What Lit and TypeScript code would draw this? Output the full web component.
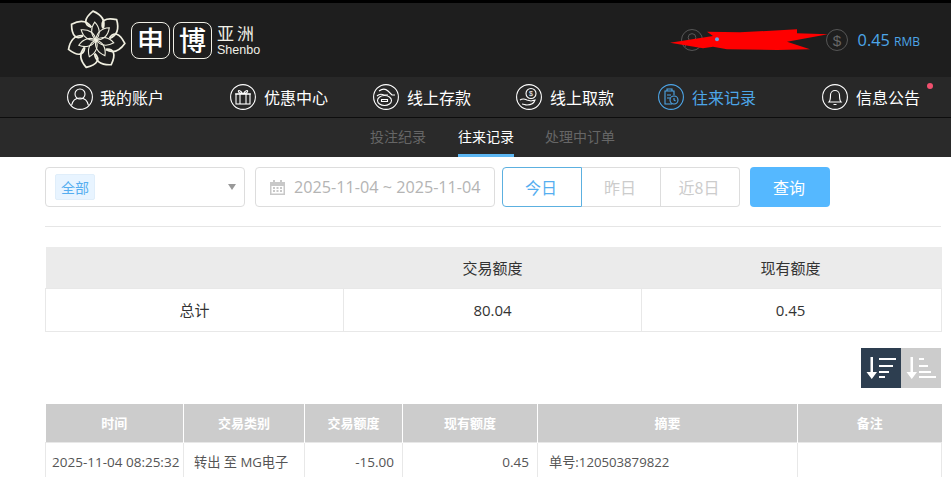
import { LitElement, html, css, svg } from "lit";
import { customElement } from "lit/decorators.js";

const petals = [0, 1, 2, 3, 4, 5, 6];

@customElement("app-root")
export class AppRoot extends LitElement {
  static styles = css`
    :host { display: block; width: 951px; height: 477px; overflow: hidden; position: relative; background: #fff;
      font-family: "Open Sans", "Noto Sans CJK SC", sans-serif; color: #555; }
    * { box-sizing: border-box; }
    svg { display: block; flex: none; }
    .top { height: 77px; background: #1e1e1e; border-top: 3px solid #000; display: flex; align-items: center; padding-left: 65px; position: relative; }
    .logo { display: flex; align-items: center; }
    .chars { display: flex; gap: 3px; margin-left: 4px; }
    .char { width: 39px; height: 37px; border: 1px solid #f0efe6; border-radius: 8px; color: #fff; font-size: 27px; font-weight: 500; line-height: 33px; text-align: center; font-family: "Noto Sans CJK SC", sans-serif; }
    .brand { margin-left: 5px; color: #f0efe6; display: flex; flex-direction: column; }
    .brand b { font-weight: 400; font-size: 17px; line-height: 20px; letter-spacing: 3px; font-family: "Noto Sans CJK SC", sans-serif; }
    .brand span { font-family: "Liberation Sans", sans-serif; font-size: 12.5px; line-height: 15px; }
    .acct { margin-left: auto; display: flex; align-items: center; padding-right: 31px; gap: 10px; color: #4da6e8; font-size: 16.3px; }
    .acct small { font-size: 12px; }
    .acct .user { margin-right: 113px; }
    .scribble { position: absolute; left: 670px; top: 24px; }
    .nav { height: 41px; background: #282828; border-bottom: 1px solid #0d0d0d; display: grid; grid-template-columns: 163px 143px 143px 142px 164px auto; padding-left: 67px; align-items: center; }
    .nav a { display: flex; align-items: center; gap: 8px; color: #fff; font-size: 16px; font-family: "Noto Sans CJK SC", sans-serif; height: 26px; position: relative; }
    .nav a:first-child { gap: 7px; }
    .nav a span { margin-top: -1px; }
    .nav a.on { color: #4da6e8; }
    .dot { position: absolute; left: 105px; top: -1px; width: 6px; height: 6px; border-radius: 50%; background: #f0506e; }
    .sub { height: 39px; background: #2a2a2a; display: flex; padding-left: 370px; gap: 32px; font-size: 14px; font-family: "Noto Sans CJK SC", sans-serif; color: #666; }
    .sub span { line-height: 37px; height: 39px; }
    .sub span:last-child { margin-left: -1px; }
    .sub .on { color: #fff; border-bottom: 3px solid #5cb6f2; }
    .content { padding: 10px 10px 0 45px; }
    .filters { display: flex; height: 40px; }
    .select { width: 200px; border: 1px solid #ddd; border-radius: 4px; display: flex; align-items: center; padding: 0 8px 0 9px; justify-content: space-between; }
    .tag { width: 40px; height: 26px; background: #e8f4ff; border: 1px solid #e0eefa; border-radius: 2px; color: #55aef0; font-size: 14px; line-height: 24px; text-align: center; font-family: "Noto Sans CJK SC", sans-serif; }
    .caret { width: 0; height: 0; border: 4px solid transparent; border-top: 6px solid #999; border-bottom: 0; }
    .date { width: 240px; margin-left: 10px; border: 1px solid #ddd; border-radius: 4px; display: flex; align-items: center; padding-left: 13px; gap: 8px; font-size: 16.2px; color: #b4b4b4; white-space: nowrap; }
    .group { display: flex; margin-left: 7px; width: 238px; }
    .group span { flex: 1; border: 1px solid #ddd; border-left: 0; color: #ccc; font-size: 16px; line-height: 38px; text-align: center; padding-right: 2px; font-family: "Noto Sans CJK SC", sans-serif; }
    .group span:last-child { border-radius: 0 4px 4px 0; }
    .group .on { border: 1px solid #5cb0e0; border-radius: 4px 0 0 4px; color: #55aef0; flex: none; width: 80px; }
    .query { width: 80px; margin-left: 10px; background: #55b8ff; border-radius: 4px; color: #fff; font-size: 16px; line-height: 40px; text-align: center; padding-right: 2px; font-family: "Noto Sans CJK SC", sans-serif; }
    hr { border: 0; border-top: 1px solid #e6e6e6; margin: 19px 0 20px; }
    table { border-collapse: collapse; table-layout: fixed; width: 896px; }
    .sum th { height: 41px; background: #ebebeb; font-weight: 400; font-size: 15px; color: #333; padding: 0; font-family: "Noto Sans CJK SC", sans-serif; }
    .sum th:last-child { padding-right: 2px; }
    .sum td { height: 43px; border: 1px solid #e8e8e8; text-align: center; font-size: 15px; color: #333; padding: 0; }
    .sum td:last-child { padding-right: 2px; }
    .sort { display: flex; justify-content: flex-end; margin: 16px 0 16px; }
    .sort div { width: 40px; height: 40px; display: flex; align-items: center; justify-content: center; background: #ccc; }
    .sort div.on { background: #2d3e50; }
    .list th { height: 39px; background: #ccc; color: #fff; font-size: 13px; font-weight: 700; border-left: 1px solid #fff; padding: 0; font-family: "Noto Sans CJK SC", sans-serif; }
    .list th:first-child { border-left: 0; }
    .list td { height: 38px; border: 1px solid #e8e8e8; font-size: 13.5px; color: #555; padding: 0 6px; white-space: nowrap; }
    .list td.r { text-align: right; padding-right: 8px; }
    .list td.l { padding-left: 10px; }
    .list td.t { font-size: 13.2px; }
  `;

  logo() {
    return html`<svg width="62" height="62" viewBox="-31 -31 62 62" fill="none" stroke="#f0efe0" stroke-width="1.4">
      ${petals.map(
        (i) => svg`<g transform="rotate(${(i * 360) / 7 - 4})">
          <path d="M0 0C-5 -5 -5 -12 0 -18C5 -12 5 -5 0 0Z" stroke-width="1.1"/>
          <path d="M-4 -13C-11 -16 -11 -22 -1 -29C7 -25 11 -19 8 -11" stroke-width="1.7"/>
        </g>`
      )}
    </svg>`;
  }

  circle(inner: unknown, color = "#fff", size = 26) {
    return html`<svg width=${size} height=${size} viewBox="0 0 26 26" fill="none" stroke=${color} stroke-width="1.1">
      <circle cx="13" cy="13" r="12.4"/>${inner}
    </svg>`;
  }

  render() {
    return html`
      <div class="top">
        <div class="logo">
          ${this.logo()}
          <div class="chars"><div class="char">申</div><div class="char">博</div></div>
          <div class="brand"><b>亚洲</b><span>Shenbo</span></div>
        </div>
        <div class="acct">
          <span class="user">${this.circle(svg`<circle cx="13" cy="10" r="4.5"/><path d="M5 21c1-5 4-7 8-7s7 2 8 7"/>`, "#5a5a5a", 22)}</span>
          ${this.circle(svg`<text x="13" y="19.500" text-anchor="middle" font-size="18" fill="#666" stroke="none" font-family="Liberation Sans">$</text>`, "#5a5a5a", 22)}
          <span>0.45 <small>RMB</small></span>
        </div>
        <svg class="scribble" width="160" height="27" viewBox="0 0 160 27">
          <path d="M0 15.700L43 9L37 4.700L70 5.300L127 2.300L127 6.300L158 7.300L117 14.700L140 22.300L107 23L57 22.300L43 19.700L33 21.300Z" fill="#fe0000"/>
          <circle cx="47" cy="12.300" r="2" fill="#6aa0e0"/>
        </svg>
      </div>
      <div class="nav">
        <a>${this.circle(svg`<circle cx="13" cy="10" r="5"/><path d="M4.5 21.5c1-5 4-7.5 8.500-7.500s7.500 2.500 8.500 7.500"/>`)}<span>我的账户</span></a>
        <a>${this.circle(svg`<rect x="6" y="10" width="14" height="10"/><path d="M5 10h16M10 10v10M16 10v10M13 10C10 5 7 6 9 8.500L13 10C16 5 19 6 17 8.500L13 10"/>`)}<span>优惠中心</span></a>
        <a>${this.circle(svg`<ellipse cx="11.500" cy="16.500" rx="7" ry="5"/><path d="M8.500 15.500h6v2h-6zM6 7c4-3 7-2 9 0l4 4 3 0M4 12c2-2 5-2 7-1l4 0"/>`)}<span>线上存款</span></a>
        <a>${this.circle(svg`<circle cx="15" cy="9.500" r="5"/><text x="15" y="12" text-anchor="middle" font-size="7" fill="#fff" stroke="none" font-family="Liberation Sans">$</text><path d="M4 16c3-2 5-1 7 0l4 1 4-1c-1 3-4 5-8 5-2 0-3-1-5-1"/>`)}<span>线上取款</span></a>
        <a class="on">${this.circle(svg`<path d="M14 20H7V7h2V5h5v2h2v4M9 7h5M9 11h4M9 14h3"/><circle cx="16" cy="16" r="4"/><path d="M16 14v2l1.500 1"/>`, "#4da6e8")}<span>往来记录</span></a>
        <a>${this.circle(svg`<path d="M7 18c1-1 1.500-2 1.500-7a4.500 4.500 0 0 1 9 0c0 5 .5 6 1.500 7zM11.500 20.500h3"/>`)}<span>信息公告</span><i class="dot"></i></a>
      </div>
      <div class="sub"><span>投注纪录</span><span class="on">往来记录</span><span>处理中订单</span></div>
      <div class="content">
        <div class="filters">
          <div class="select"><span class="tag">全部</span><i class="caret"></i></div>
          <div class="date">
            <svg width="17" height="17" viewBox="0 0 17 17" fill="#c8c8c8"><path d="M1 3h3V1h2v2h5V1h2v2h3v13H1zM2.500 7v7.500h12V7z"/><path d="M4 8h2v2H4zM7.500 8h2v2h-2zM11 8h2v2h-2zM4 11h2v2H4zM7.500 11h2v2h-2zM11 11h2v2h-2z"/></svg>
            2025-11-04 ~ 2025-11-04
          </div>
          <div class="group"><span class="on">今日</span><span>昨日</span><span>近8日</span></div>
          <div class="query">查询</div>
        </div>
        <hr />
        <table class="sum">
          <colgroup><col style="width:298px" /><col style="width:298px" /><col style="width:300px" /></colgroup>
          <tr><th></th><th>交易额度</th><th>现有额度</th></tr>
          <tr><td>总计</td><td>80.04</td><td>0.45</td></tr>
        </table>
        <div class="sort">
          <div class="on">
            <svg width="32" height="26" viewBox="0 0 32 26" fill="#fff"><path d="M5.500 2h2.500v15h4l-5.250 7-5.250-7h4z"/><path d="M14 3h17v2H14zM14 10h14v2H14zM14 16h10v2H14zM14 21h6v2h-6z"/></svg>
          </div>
          <div>
            <svg width="32" height="26" viewBox="0 0 32 26" fill="#fff"><path d="M5.500 2h2.500v15h4l-5.250 7-5.250-7h4z"/><path d="M14 3h5v2h-5zM14 10h9v2h-9zM14 16h12v2H14zM14 21h17v2H14z"/></svg>
          </div>
        </div>
        <table class="list">
          <colgroup>
            <col style="width:138px" /><col style="width:121px" /><col style="width:98px" /><col style="width:135px" /><col style="width:260px" /><col style="width:144px" />
          </colgroup>
          <tr><th>时间</th><th>交易类别</th><th>交易额度</th><th>现有额度</th><th>摘要</th><th>备注</th></tr>
          <tr>
            <td>2025-11-04 08:25:32</td><td class="l t">转出 至 MG电子</td><td class="r">-15.00</td><td class="r">0.45</td><td class="l t" style="padding-left:11px">单号:120503879822</td><td></td>
          </tr>
        </table>
      </div>
    `;
  }
}
